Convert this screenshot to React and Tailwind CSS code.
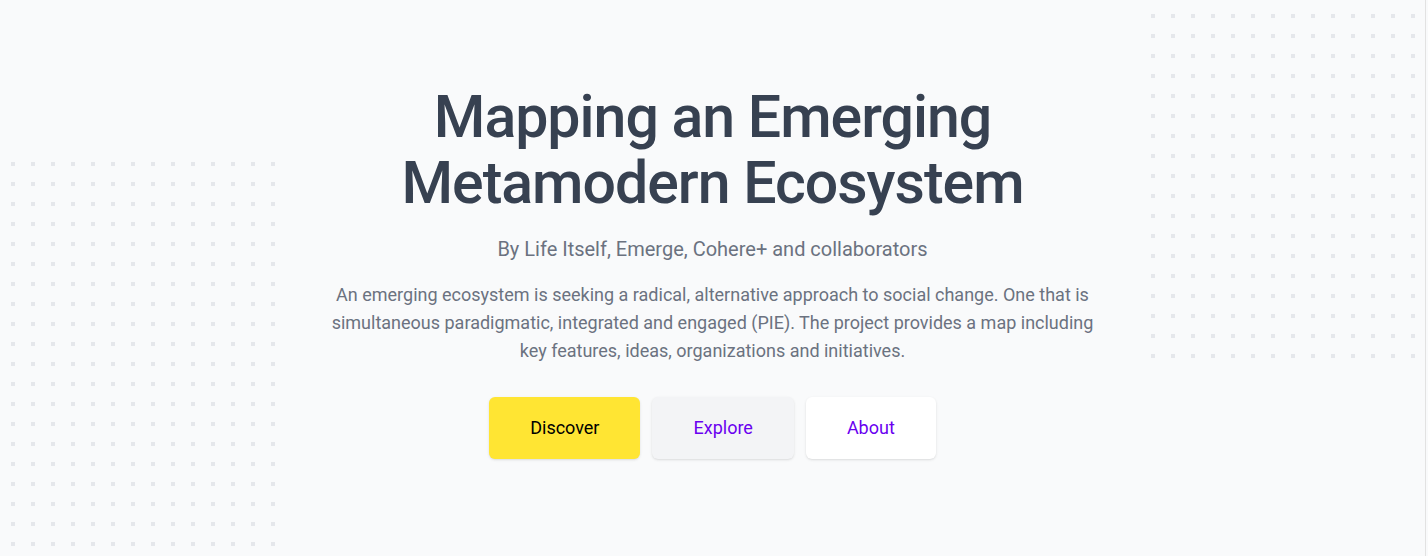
import React from 'react';

const DotGrid = ({ id, cols, rows, className }) => (
  <svg
    className={className}
    width={cols * 20}
    height={rows * 20}
    fill="none"
    aria-hidden="true"
  >
    <defs>
      <pattern id={id} x="0" y="0" width="20" height="20" patternUnits="userSpaceOnUse">
        <rect x="0" y="0" width="4" height="4" fill="#e5e7eb" />
      </pattern>
    </defs>
    <rect width={cols * 20} height={rows * 20} fill={`url(#${id})`} />
  </svg>
);

const App = () => {
  return (
    <section
      className="relative h-[556px] w-full overflow-hidden bg-[#f9fafb]"
      style={{ fontFamily: 'Roboto, "Liberation Sans", sans-serif' }}
    >
      <DotGrid id="dots-left" cols={14} rows={20} className="absolute left-[11px] top-[162px]" />
      <DotGrid id="dots-right" cols={14} rows={18} className="absolute left-[1151px] top-[14px]" />
      <div className="absolute right-[2px] top-0 h-full w-px bg-[#e2e2e2]" />

      <div className="relative flex flex-col items-center pr-[3px] pt-[84px] text-center">
        <h1 className="text-[59px] font-medium leading-[66px] tracking-[-1px] text-[#374151]">
          Mapping an Emerging
          <br />
          Metamodern Ecosystem
        </h1>
        <p className="mt-[19px] text-xl text-[#6b7280]">
          By Life Itself, Emerge, Cohere+ and collaborators
        </p>
        <p className="mt-[18px] max-w-[780px] text-lg leading-7 text-[#6b7280]">
          An emerging ecosystem is seeking a radical, alternative approach to social change. One that is
          simultaneous paradigmatic, integrated and engaged (PIE). The project provides a map including
          key features, ideas, organizations and initiatives.
        </p>
        <div className="mt-[32px] flex gap-3">
          <a className="flex h-[62px] items-center rounded-md bg-[#ffe533] px-[41px] text-lg text-black shadow">
            Discover
          </a>
          <a className="flex h-[62px] items-center rounded-md bg-[#f3f4f6] px-[41px] text-lg text-[#6a00f0] shadow">
            Explore
          </a>
          <a className="flex h-[62px] items-center rounded-md bg-white px-[41px] text-lg text-[#6a00f0] shadow">
            About
          </a>
        </div>
      </div>
    </section>
  );
};

export default App;
